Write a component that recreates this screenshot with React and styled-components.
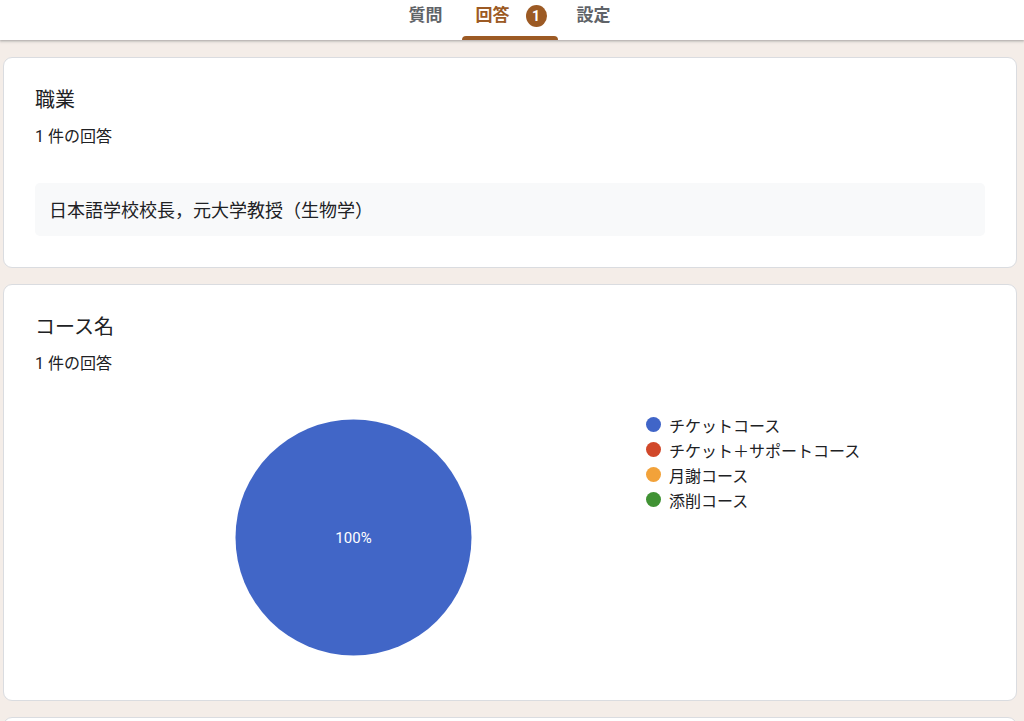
import React from "react";
import styled, { createGlobalStyle } from "styled-components";

const GlobalStyle = createGlobalStyle`
  html, body {
    margin: 0;
    padding: 0;
    background: #f4ede8;
    font-family: Roboto, "Noto Sans CJK JP", "Noto Sans", sans-serif;
    color: #202124;
  }
`;

const Page = styled.div`
  min-height: 721px;
  background: #f4ede8;
`;

const Header = styled.header`
  height: 40px;
  background: #fff;
  display: flex;
  justify-content: center;
  align-items: stretch;
  gap: 6px;
  box-shadow: 0 1px 2px rgba(60, 64, 67, 0.3), 0 1px 3px 1px rgba(60, 64, 67, 0.12);
  position: relative;
  z-index: 1;
  padding-right: 5px;
`;

const Tab = styled.div`
  position: relative;
  display: flex;
  align-items: center;
  gap: 16px;
  padding: 0 ${(p) => (p.$active ? "11px" : "13px")} 10px
    ${(p) => (p.$active ? "14px" : "13px")};
  font-size: 17px;
  font-weight: 700;
  color: ${(p) => (p.$active ? "#9c5a24" : "#5f6368")};

  &::after {
    content: "";
    display: ${(p) => (p.$active ? "block" : "none")};
    position: absolute;
    left: 0;
    right: 0;
    bottom: 0;
    height: 4px;
    background: #9c5a24;
    border-radius: 4px 4px 0 0;
  }
`;

const TabLabel = styled.span`
  margin-bottom: 4px;
`;

const Badge = styled.span`
  display: inline-flex;
  align-items: center;
  justify-content: center;
  width: 21px;
  height: 22px;
  margin-top: 2px;
  border-radius: 50%;
  background: #9c5a24;
  color: #fff;
  font-size: 14px;
  font-weight: 700;
`;

const Content = styled.main`
  display: flex;
  flex-direction: column;
  gap: 16px;
  padding: 17px 7px 0 3px;
`;

const Card = styled.section`
  background: #fff;
  border: 1px solid #dadce0;
  border-radius: 9px;
  padding: 28px 31px 31px;
  height: ${(p) => p.$h || "auto"};
  box-sizing: border-box;
`;

const Title = styled.h2`
  margin: 0;
  font-size: 20px;
  font-weight: 400;
  line-height: 28px;
  color: #202124;
`;

const Count = styled.div`
  margin-top: 11px;
  font-size: 16px;
  line-height: 24px;
  color: #202124;
`;

const Answer = styled.div`
  margin-top: 34px;
  background: #f8f9fa;
  border-radius: 5px;
  padding: 15px 14px;
  font-family: "Noto Sans CJK JP", sans-serif;
  font-size: 18px;
  line-height: 23px;
  color: #202124;
  text-spacing-trim: space-all;
`;

const ChartRow = styled.div`
  display: grid;
  grid-template-columns: 611px 1fr;
  margin-top: 36px;
`;

const PieWrap = styled.div`
  padding-left: 200px;
  padding-top: 7px;
`;

const Legend = styled.ul`
  list-style: none;
  margin: 0;
  padding: 0;
  display: flex;
  flex-direction: column;
`;

const LegendItem = styled.li`
  display: flex;
  align-items: center;
  gap: 8px;
  height: 25px;
  font-size: 16px;
  color: #202124;
`;

const Dot = styled.span`
  width: 15px;
  height: 15px;
  border-radius: 50%;
  background: ${(p) => p.$color};
`;

const legend = [
  { label: "チケットコース", color: "#4065c8" },
  { label: "チケット＋サポートコース", color: "#d1482a" },
  { label: "月謝コース", color: "#f2a23a" },
  { label: "添削コース", color: "#409234" },
];

export default function App() {
  return (
    <Page>
      <GlobalStyle />
      <Header>
        <Tab>
          <TabLabel>質問</TabLabel>
        </Tab>
        <Tab $active>
          <TabLabel>回答</TabLabel>
          <Badge>1</Badge>
        </Tab>
        <Tab>
          <TabLabel>設定</TabLabel>
        </Tab>
      </Header>
      <Content>
        <Card>
          <Title>職業</Title>
          <Count>1 件の回答</Count>
          <Answer>日本語学校校長，元大学教授（生物学）</Answer>
        </Card>
        <Card $h="417px">
          <Title>コース名</Title>
          <Count>1 件の回答</Count>
          <ChartRow>
            <PieWrap>
              <svg width="237" height="237" viewBox="0 0 237 237">
                <circle cx="118.5" cy="118.5" r="118" fill="#4166c7" />
                <text
                  x="118.5"
                  y="123.5"
                  textAnchor="middle"
                  fill="#fff"
                  fontSize="15"
                  fontFamily="Roboto, sans-serif"
                >
                  100%
                </text>
              </svg>
            </PieWrap>
            <Legend>
              {legend.map((l) => (
                <LegendItem key={l.label}>
                  <Dot $color={l.color} />
                  {l.label}
                </LegendItem>
              ))}
            </Legend>
          </ChartRow>
        </Card>
        <Card $h="40px" />
      </Content>
    </Page>
  );
}
